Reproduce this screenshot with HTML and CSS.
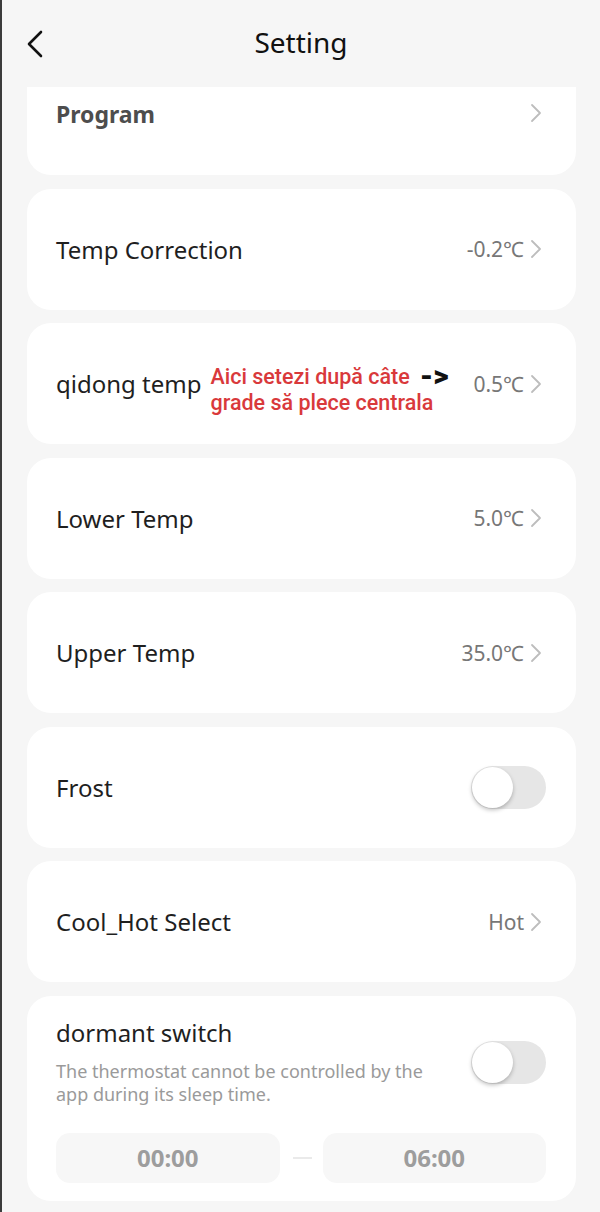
FILE: index.html
```html
<!DOCTYPE html>
<html>
<head>
<meta charset="utf-8">
<link rel="stylesheet" href="styles.css">
</head>
<body>
<div class="page">
  <header class="topbar">
    <svg class="back" width="18" height="28" viewBox="0 0 18 28"><path d="M15 2 L3 14 L15 26" fill="none" stroke="#111" stroke-width="2.6" stroke-linecap="round" stroke-linejoin="round"/></svg>
    <h1 class="title">Setting</h1>
  </header>
  <main class="list">
    <div class="card card-cut">
      <span class="label label-dim">Program</span>
      <span class="right"><svg class="chev" width="12" height="20" viewBox="0 0 12 20"><path d="M2 2 L10 10 L2 18" fill="none" stroke="#bdbdbd" stroke-width="1.8" stroke-linecap="round" stroke-linejoin="round"/></svg></span>
    </div>
    <div class="card">
      <span class="label">Temp Correction</span>
      <span class="right"><span class="value">-0.2℃</span><svg class="chev" width="12" height="20" viewBox="0 0 12 20"><path d="M2 2 L10 10 L2 18" fill="none" stroke="#bdbdbd" stroke-width="1.8" stroke-linecap="round" stroke-linejoin="round"/></svg></span>
    </div>
    <div class="card">
      <span class="label">qidong temp</span>
      <span class="note"><span class="note-line">Aici setezi după câte<span class="arrow">-&gt;</span></span><span class="note-line">grade să plece centrala</span></span>
      <span class="right"><span class="value">0.5℃</span><svg class="chev" width="12" height="20" viewBox="0 0 12 20"><path d="M2 2 L10 10 L2 18" fill="none" stroke="#bdbdbd" stroke-width="1.8" stroke-linecap="round" stroke-linejoin="round"/></svg></span>
    </div>
    <div class="card">
      <span class="label">Lower Temp</span>
      <span class="right"><span class="value">5.0℃</span><svg class="chev" width="12" height="20" viewBox="0 0 12 20"><path d="M2 2 L10 10 L2 18" fill="none" stroke="#bdbdbd" stroke-width="1.8" stroke-linecap="round" stroke-linejoin="round"/></svg></span>
    </div>
    <div class="card">
      <span class="label">Upper Temp</span>
      <span class="right"><span class="value">35.0℃</span><svg class="chev" width="12" height="20" viewBox="0 0 12 20"><path d="M2 2 L10 10 L2 18" fill="none" stroke="#bdbdbd" stroke-width="1.8" stroke-linecap="round" stroke-linejoin="round"/></svg></span>
    </div>
    <div class="card">
      <span class="label">Frost</span>
      <span class="right"><span class="toggle toggle-row"><span class="knob"></span></span></span>
    </div>
    <div class="card">
      <span class="label">Cool_Hot Select</span>
      <span class="right"><span class="value">Hot</span><svg class="chev" width="12" height="20" viewBox="0 0 12 20"><path d="M2 2 L10 10 L2 18" fill="none" stroke="#bdbdbd" stroke-width="1.8" stroke-linecap="round" stroke-linejoin="round"/></svg></span>
    </div>
    <div class="card card-dormant">
      <div class="dormant-top">
        <div class="dormant-text">
          <div class="label">dormant switch</div>
          <div class="desc">The thermostat cannot be controlled by the app during its sleep time.</div>
        </div>
        <span class="toggle"><span class="knob"></span></span>
      </div>
      <div class="times">
        <div class="time">00:00</div>
        <div class="dash"></div>
        <div class="time time-b">06:00</div>
      </div>
    </div>
  </main>
</div>
</body>
</html>
```

FILE: styles.css
```css
* { box-sizing: border-box; }
html, body { margin: 0; padding: 0; }
body {
  background: #f6f6f6;
  font-family: "Noto Sans", "Open Sans", sans-serif;
  color: #1f1f1f;
}
.page {
  width: 600px;
  height: 1212px;
  border-left: 2px solid #3c3c3c;
  overflow: hidden;
}
.topbar {
  height: 87px;
  position: relative;
  display: flex;
  align-items: center;
  justify-content: center;
}
.back {
  position: absolute;
  left: 24px;
  top: 30px;
}
.title {
  margin: -3px 0 0 0;
  font-size: 28px;
  font-weight: 400;
  color: #111;
}
.list {
  display: flex;
  flex-direction: column;
  gap: 13.5px;
  padding: 0 24px 0 25px;
}
.card {
  background: #fff;
  border-radius: 24px;
  height: 121px;
  display: flex;
  align-items: center;
  padding: 0 34px 0 29px;
}
.card-cut {
  height: 88px;
  border-radius: 0 0 24px 24px;
  align-items: flex-start;
  padding-top: 11px;
}
.label {
  font-size: 24px;
  color: #1f1f1f;
}
.label-dim {
  font-size: 23px;
  font-weight: 700;
  color: #4d4d4d;
}
.right {
  margin-left: auto;
  display: flex;
  align-items: center;
  gap: 6px;
}
.card-cut .right { margin-top: 5px; }
.value {
  font-size: 21px;
  color: #777;
}
.chev { display: block; }
.note {
  margin: 12px 0 0 9px;
  display: flex;
  flex-direction: column;
  font-family: Roboto, "Noto Sans", sans-serif;
  font-size: 21.5px;
  font-weight: 500;
  color: #d9393b;
  line-height: 26px;
  white-space: nowrap;
}
.note-line {
  display: flex;
  align-items: center;
  height: 26px;
}
.arrow {
  margin-left: 10px;
  font-family: Roboto, sans-serif;
  font-weight: 900;
  font-size: 30px;
  line-height: 26px;
  color: #111;
  margin-top: -2px;
}
.toggle {
  width: 75px;
  height: 43px;
  border-radius: 22px;
  background: #e6e6e6;
  position: relative;
  display: block;
}
.toggle-row { margin-right: -4px; }
.knob {
  position: absolute;
  left: 1px;
  top: 1px;
  width: 41px;
  height: 41px;
  border-radius: 50%;
  background: #fff;
  box-shadow: 0 2px 4px rgba(0,0,0,0.25);
}
.card-dormant {
  height: 205px;
  flex-direction: column;
  align-items: stretch;
  padding: 20px 30px 18px 29px;
}
.dormant-top {
  display: flex;
  align-items: flex-start;
}
.dormant-text { flex: 1; }
.desc {
  margin-top: 11px;
  font-size: 18px;
  line-height: 23px;
  color: #9a9a9a;
  width: 390px;
}
.dormant-top .toggle { margin-top: 25px; }
.times {
  margin-top: auto;
  display: flex;
  align-items: center;
  gap: 13px;
}
.time {
  flex: 1;
  height: 50px;
  border-radius: 14px;
  background: #f7f7f7;
  display: flex;
  align-items: center;
  justify-content: center;
  font-size: 24px;
  font-weight: 700;
  color: #9d9d9d;
}
.dash {
  width: 19px;
  height: 2px;
  background: #eaeaea;
  margin-right: -2px;
}
```
